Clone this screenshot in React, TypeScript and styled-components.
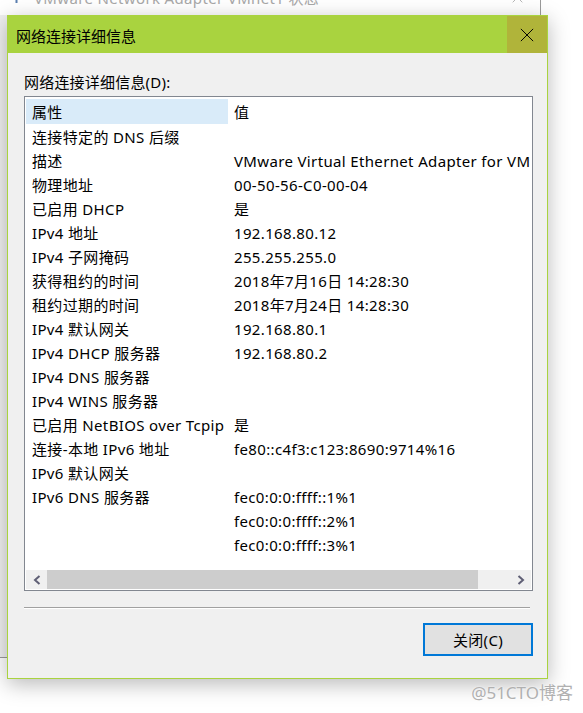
import React from "react";
import styled, { createGlobalStyle } from "styled-components";

const FONT = `"Noto Sans", "Noto Sans CJK SC", sans-serif`;

const Global = createGlobalStyle`
  html, body { margin: 0; padding: 0; background: #ffffff; overflow: hidden; }
  body { font-family: ${FONT}; }
`;

const Desktop = styled.div`
  position: relative;
  width: 583px;
  height: 713px;
  overflow: hidden;
  background: #ffffff;
`;

const BackWindow = styled.div`
  position: absolute;
  left: 0;
  top: -20px;
  width: 540px;
  height: 677px;
  background: #f0f0f0;
  border-right: 1px solid #9a9a9a;
  border-bottom: 1px solid #9a9a9a;
  display: flex;
  flex-direction: column;
`;

const BackTitleBar = styled.div`
  height: 35px;
  background: #ffffff;
  display: flex;
  align-items: center;
  padding-left: 12px;
  gap: 13px;
  color: #a8a8a8;
  font-size: 15px;
  letter-spacing: 0.35px;
  white-space: nowrap;
`;

const BackTitle = styled.span`
  flex: 1;
`;

const BackClose = styled.div`
  width: 46px;
  display: flex;
  justify-content: center;
`;

const Dialog = styled.div`
  position: absolute;
  left: 7px;
  top: 15px;
  width: 539px;
  height: 662px;
  border: 1px solid #a9d33f;
  background: #f0f0f0;
  box-shadow: 0 5px 20px rgba(0, 0, 0, 0.28);
  display: flex;
  flex-direction: column;
`;

const TitleBar = styled.div`
  height: 37px;
  background: #a9d33f;
  display: flex;
  align-items: stretch;
`;

const Title = styled.div`
  flex: 1;
  display: flex;
  align-items: center;
  padding-left: 8px;
  padding-top: 1px;
  font-size: 15px;
  color: #000;
`;

const CloseBox = styled.div`
  width: 40px;
  background: #b0b43a;
  display: flex;
  align-items: center;
  justify-content: center;
`;

const Body = styled.div`
  flex: 1;
  display: flex;
  flex-direction: column;
  padding: 19px 14px 0 16px;
`;

const Label = styled.div`
  font-size: 15px;
  line-height: 20px;
  height: 20px;
  color: #000;
  letter-spacing: 0.2px;
`;

const ListBox = styled.div`
  margin-top: 4px;
  height: 495px;
  box-sizing: border-box;
  border: 1px solid #828790;
  background: #ffffff;
  padding: 1px;
  display: flex;
  flex-direction: column;
  overflow: hidden;
`;

const Rows = styled.div`
  flex: 1;
  padding-top: 1px;
  overflow: hidden;
`;

const Row = styled.div<{ $header?: boolean }>`
  display: grid;
  grid-template-columns: 202px 1fr;
  height: ${(p) => (p.$header ? 25 : 24)}px;
  line-height: ${(p) => (p.$header ? 26 : 26)}px;
  font-size: 15px;
  letter-spacing: 0.35px;
  color: #000;
  white-space: nowrap;
`;

const Cell = styled.div<{ $hl?: boolean }>`
  padding-left: 6px;
  overflow: hidden;
  background: ${(p) => (p.$hl ? "#d9ebf9" : "transparent")};
`;

const HScroll = styled.div`
  height: 19px;
  display: flex;
  background: #f0f0f0;
`;

const ArrowBtn = styled.div`
  width: 21px;
  display: flex;
  align-items: center;
  justify-content: center;
`;

const Thumb = styled.div`
  width: 431px;
  background: #cdcdcd;
`;

const Track = styled.div`
  flex: 1;
`;

const Separator = styled.div`
  margin-top: 16px;
  margin-right: 3px;
  height: 1px;
  background: #a0a0a0;
  border-bottom: 1px solid #ffffff;
`;

const ButtonRow = styled.div`
  margin-top: 14px;
  display: flex;
  justify-content: flex-end;
`;

const Button = styled.div`
  width: 110px;
  height: 33px;
  box-sizing: border-box;
  border: 2px solid #0078d7;
  background: #e1e1e1;
  display: flex;
  align-items: center;
  justify-content: center;
  font-size: 15px;
  letter-spacing: 0.3px;
  color: #000;
`;

const Watermark = styled.div`
  position: absolute;
  right: 10px;
  bottom: 9px;
  font-size: 17px;
  color: #b0b0b0;
  font-family: ${FONT};
  text-shadow: 0 0 2px #ffffff;
`;

const rows: [string, string][] = [
  ["连接特定的 DNS 后缀", ""],
  ["描述", "VMware Virtual Ethernet Adapter for VMnet1"],
  ["物理地址", "00-50-56-C0-00-04"],
  ["已启用 DHCP", "是"],
  ["IPv4 地址", "192.168.80.12"],
  ["IPv4 子网掩码", "255.255.255.0"],
  ["获得租约的时间", "2018年7月16日 14:28:30"],
  ["租约过期的时间", "2018年7月24日 14:28:30"],
  ["IPv4 默认网关", "192.168.80.1"],
  ["IPv4 DHCP 服务器", "192.168.80.2"],
  ["IPv4 DNS 服务器", ""],
  ["IPv4 WINS 服务器", ""],
  ["已启用 NetBIOS over Tcpip", "是"],
  ["连接-本地 IPv6 地址", "fe80::c4f3:c123:8690:9714%16"],
  ["IPv6 默认网关", ""],
  ["IPv6 DNS 服务器", "fec0:0:0:ffff::1%1"],
  ["", "fec0:0:0:ffff::2%1"],
  ["", "fec0:0:0:ffff::3%1"],
];

const XIcon = ({ color, size }: { color: string; size: number }) => (
  <svg width={size} height={size} viewBox="0 0 16 16">
    <path d="M1 1 L15 15 M15 1 L1 15" stroke={color} strokeWidth="1.1" fill="none" />
  </svg>
);

const Chevron = ({ dir }: { dir: "left" | "right" }) => (
  <svg width="8" height="10" viewBox="0 0 8 10">
    <path
      d={dir === "left" ? "M6.5 1 L2 5 L6.5 9" : "M1.5 1 L6 5 L1.5 9"}
      stroke="#5f5f75"
      strokeWidth="2"
      fill="none"
    />
  </svg>
);

const NetIcon = () => (
  <svg width="9" height="12" viewBox="0 0 9 12">
    <rect x="0" y="0" width="9" height="7" fill="#5a7fb0" />
    <rect x="3.5" y="7" width="2" height="4" fill="#5a7fb0" />
  </svg>
);

export default function App() {
  return (
    <Desktop>
      <Global />
      <BackWindow>
        <BackTitleBar>
          <NetIcon />
          <BackTitle>VMware Network Adapter VMnet1 状态</BackTitle>
          <BackClose>
            <XIcon color="#a0a0a0" size={11} />
          </BackClose>
        </BackTitleBar>
      </BackWindow>
      <Dialog>
        <TitleBar>
          <Title>网络连接详细信息</Title>
          <CloseBox>
            <XIcon color="#000" size={14} />
          </CloseBox>
        </TitleBar>
        <Body>
          <Label>网络连接详细信息(D):</Label>
          <ListBox>
            <Rows>
              <Row $header>
                <Cell $hl>属性</Cell>
                <Cell>值</Cell>
              </Row>
              {rows.map(([k, v], i) => (
                <Row key={i}>
                  <Cell>{k}</Cell>
                  <Cell>{v}</Cell>
                </Row>
              ))}
            </Rows>
            <HScroll>
              <ArrowBtn>
                <Chevron dir="left" />
              </ArrowBtn>
              <Thumb />
              <Track />
              <ArrowBtn>
                <Chevron dir="right" />
              </ArrowBtn>
            </HScroll>
          </ListBox>
          <Separator />
          <ButtonRow>
            <Button>关闭(C)</Button>
          </ButtonRow>
        </Body>
      </Dialog>
      <Watermark>@51CTO博客</Watermark>
    </Desktop>
  );
}
